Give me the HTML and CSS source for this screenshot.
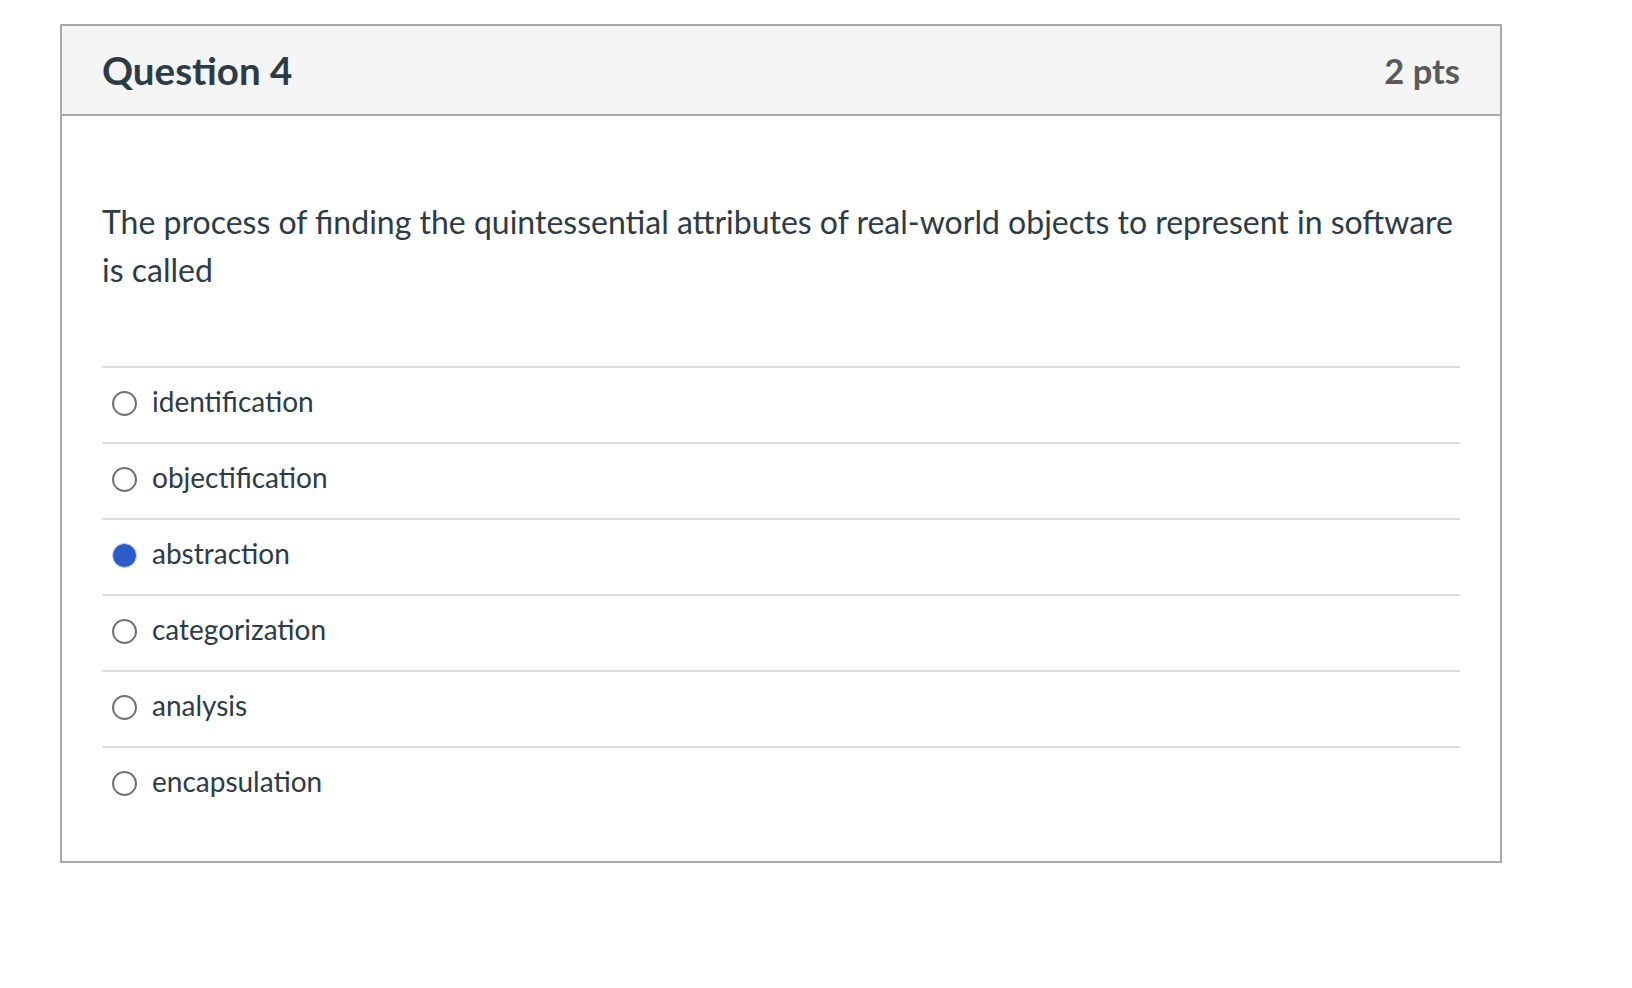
FILE: index.html
```html
<!DOCTYPE html>
<html lang="en">
<head>
<meta charset="utf-8">
<title>Question 4</title>
<link rel="stylesheet" href="styles.css">
</head>
<body>
<div class="question">
  <div class="q-header">
    <h2 class="q-name">Question 4</h2>
    <span class="q-points">2 pts</span>
  </div>
  <div class="q-body">
    <p class="q-text">The process of finding the quintessential attributes of real-world objects to represent in software is called</p>
    <ul class="answers">
      <li class="answer"><span class="radio"></span><span class="label">identification</span></li>
      <li class="answer"><span class="radio"></span><span class="label">objectification</span></li>
      <li class="answer"><span class="radio checked"></span><span class="label">abstraction</span></li>
      <li class="answer"><span class="radio"></span><span class="label">categorization</span></li>
      <li class="answer"><span class="radio"></span><span class="label">analysis</span></li>
      <li class="answer"><span class="radio"></span><span class="label">encapsulation</span></li>
    </ul>
  </div>
</div>
</body>
</html>
```

FILE: styles.css
```css
html, body {
  margin: 0;
  padding: 0;
  background: #ffffff;
}
body {
  font-family: Lato, "Open Sans", "Liberation Sans", sans-serif;
  color: #2d3b45;
  padding: 24px 0 0 60px;
}
.question {
  width: 1438px;
  border: 2px solid #a8a8a8;
}
.q-header {
  display: flex;
  align-items: center;
  justify-content: space-between;
  height: 88px;
  padding: 0 40px;
  background: #f5f5f5;
  border-bottom: 2px solid #a8a8a8;
}
.q-name {
  margin: 0;
  font-size: 38.5px;
  font-weight: 700;
  color: #2d3b45;
}
.q-points {
  font-size: 34.5px;
  font-weight: 700;
  color: #5a5a5a;
}
.q-body {
  padding: 82px 40px 39px;
}
.q-text {
  margin: 0 0 72px;
  font-size: 32px;
  line-height: 48px;
}
.answers {
  list-style: none;
  margin: 0;
  padding: 0;
}
.answer {
  box-sizing: border-box;
  display: flex;
  align-items: center;
  height: 76px;
  padding-bottom: 8px;
  border-top: 2px solid #dddddd;
  font-size: 28px;
}
.radio {
  box-sizing: border-box;
  width: 25px;
  height: 25px;
  margin: 4px 15px 0 10px;
  border: 2px solid #737373;
  border-radius: 50%;
  flex: none;
}
.radio.checked {
  border: 1px solid #c9d5f3;
  background: #2a5bc8;
}
.label {
  line-height: 1;
}
```
